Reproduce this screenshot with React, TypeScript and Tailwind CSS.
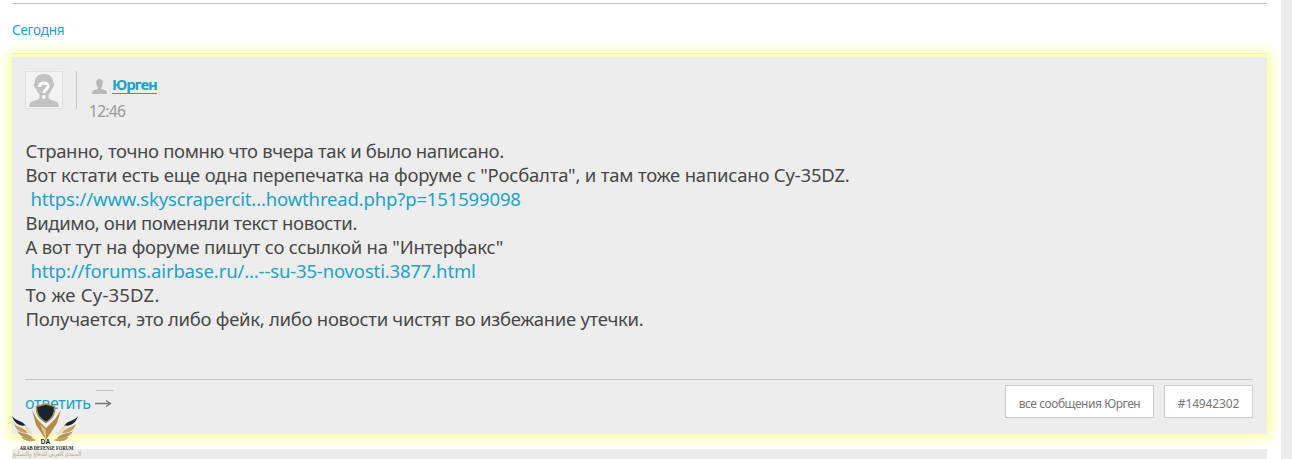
type Line = { text: string; tracking: string; link?: boolean };

const lines: Line[] = [
  { text: 'Странно, точно помню что вчера так и было написано.', tracking: 'tracking-[-0.34px]' },
  { text: 'Вот кстати есть еще одна перепечатка на форуме с "Росбалта", и там тоже написано Су-35DZ.', tracking: 'tracking-[-0.19px]' },
  { text: 'https://www.skyscrapercit...howthread.php?p=151599098', tracking: 'tracking-[-0.15px]', link: true },
  { text: 'Видимо, они поменяли текст новости.', tracking: 'tracking-[-0.36px]' },
  { text: 'А вот тут на форуме пишут со ссылкой на "Интерфакс"', tracking: 'tracking-[-0.23px]' },
  { text: 'http://forums.airbase.ru/...--su-35-novosti.3877.html', tracking: 'tracking-[-0.15px]', link: true },
  { text: 'То же Су-35DZ.', tracking: 'tracking-[0.2px]' },
  { text: 'Получается, это либо фейк, либо новости чистят во избежание утечки.', tracking: 'tracking-[-0.28px]' },
];

function Avatar() {
  return (
    <div className="h-[38px] w-[38px] border border-[#e0e0e0] bg-[#f2f2f2]">
      <svg viewBox="0 0 36 36" className="h-9 w-9">
        <path
          d="M18 2c-6.500 0-9.500 4-9.200 9-.9.2-1.200 1-.9 2.300.3 1.900 1.200 3.200 2.100 3.400.7 2.400 1.900 4.400 3.500 5.700v3.700c-1.500 1.800-6 2.700-8.300 4-1.300.8-2 2.200-2.200 4.900h30c-.2-2.700-.9-4.100-2.200-4.900-2.300-1.300-6.800-2.200-8.300-4v-3.700c1.600-1.300 2.800-3.300 3.500-5.700.9-.2 1.800-1.500 2.100-3.400.3-1.300 0-2.100-.9-2.300.3-5-2.700-9-9.200-9z"
          fill="#c2c2c2"
        />
        <path d="M13.400 15c.2-2.700 1.800-4 4.500-4 2.500 0 4.200 1.200 4.200 3.300 0 3-4.300 2.900-4.300 6.800" fill="none" stroke="#fff" strokeWidth="3" />
        <circle cx="17.900" cy="24.800" r="1.900" fill="#fff" />
      </svg>
    </div>
  );
}

function UserIcon() {
  return (
    <svg viewBox="0 0 15 15" className="h-[15px] w-[15px]">
      <path d="M7.500 0C5 0 4 1.700 4.200 4c.1 1.900.8 3.300 1.600 4.200v1.300C4.800 10.700.5 10.900.2 13v2h14.600v-2c-.3-2.100-4.600-2.300-5.600-3.500V8.200c.8-.9 1.500-2.300 1.600-4.200C11 1.700 10 0 7.500 0z" fill="#b8b8b8" />
    </svg>
  );
}

function Wing() {
  return (
    <g>
      <path d="M1 14c3 5 10 4 14 10-7 0-12-3-14-10z" fill="#17252e" />
      <path d="M3 21.500c3 4 9 2.500 14 9.500-7 0-12-2-14-9.500z" fill="#c4a163" />
      <path d="M6 29c5 3 10 1 16 7-6 1-13-1-16-7z" fill="#b8945a" />
      <path d="M10 35c5 0 10 0 15 3-5 3-12 1-15-3z" fill="#c4a163" />
      <path d="M13 23c5 2 7 5 8 10-4-2-7-6-8-10z" fill="#eadcae" />
    </g>
  );
}

// Forum emblem laid over the bottom left corner of the post
function Watermark() {
  return (
    <div className="absolute left-[11px] top-[402px] h-[57px] w-[72px]">
      <svg viewBox="0 0 72 57" className="h-[57px] w-[72px] overflow-visible">
        <Wing />
        <g transform="translate(68 0) scale(-1 1)">
          <Wing />
        </g>
        <path d="M21 8l5 9 9 9 9-9 6-9-4 13-11 17-10-15z" fill="#b48b48" />
        <path d="M29 22l6 6v10z" fill="#dcc38a" />
        <path d="M25.500 4.500L35 2l8.500 2.500c1 8-2.500 12-8.500 16C28.500 16.500 25 12.500 25.500 4.500z" fill="#17252e" stroke="#a98a52" strokeWidth="1.500" />
        <text x="34.500" y="41.500" textAnchor="middle" fontFamily="Liberation Sans" fontWeight="bold" fontSize="6.500" fill="#182124">DA</text>
        <g transform="translate(35.500 48) scale(.82 1)">
          <text textAnchor="middle" fontFamily="Liberation Serif" fontWeight="bold" fontSize="5.600" fill="#222">ARAB DEFENSE FORUM</text>
        </g>
        <g transform="translate(36 54) scale(.72 1)">
          <text textAnchor="middle" fontFamily="DejaVu Sans" fontWeight="bold" fontSize="6.200" fill="#ceb994">المنتدى العربي للدفاع والتسليح</text>
        </g>
      </svg>
    </div>
  );
}

function Post() {
  return (
    <article className="mt-[3px] h-[377px] bg-[#ededed] pl-[13px] pr-[14px] pt-[14px] shadow-[0_0_12px_4px_#f8ff98]">
      <header className="flex h-[68px] items-start">
        <Avatar />
        <div className="ml-[13px] h-[38px] w-px bg-[#c8c8c8]" />
        <div className="ml-3">
          <div className="flex h-[26px] items-center gap-[5px] pl-[3px] pt-[5px]">
            <UserIcon />
            <a className="-mt-[5px] border-b border-[#20a3c6] text-[15px] font-bold leading-[18px] tracking-[-1.1px] text-[#20a3c6]">Юрген</a>
          </div>
          <time className="block text-[15.5px] leading-7 tracking-[-0.7px] text-[#999]">12:46</time>
        </div>
      </header>

      <div className="h-[240px] whitespace-nowrap pl-[0.5px] text-[18.5px] leading-6 text-[#484848]">
        {lines.map((line) => (
          <p key={line.text} className={line.link ? 'pl-[5px] text-[#20a3c6]' : ''}>
            <span className={line.tracking}>{line.text}</span>
          </p>
        ))}
      </div>

      <footer className="flex items-start border-t border-[#c8c8c8] pt-[5px]">
        <a className="flex items-center pt-[6px] text-[16px] leading-6 text-[#20a3c6]">
          <span className="tracking-[-0.3px]">ответить</span>
          <svg viewBox="0 0 20 26" className="-mt-[4px] ml-1 h-[26px] w-5" fill="none" stroke="#777">
            <path d="M1 2.500h18" stroke="#c4c4c4" />
            <path d="M0 15.500h15M11 12.500l4.500 3-4.500 3" strokeWidth="1.300" />
          </svg>
        </a>
        <div className="ml-auto flex gap-[10px] text-[12px] text-[#777]">
          <a className="flex h-[33px] w-[149px] items-center justify-center border border-[#ccc] bg-white pt-1 tracking-[-0.45px]">все сообщения Юрген</a>
          <a className="flex h-[33px] w-[89px] items-center justify-center border border-[#ccc] bg-white pt-1 tracking-[-0.15px]">#14942302</a>
        </div>
      </footer>
    </article>
  );
}

export default function App() {
  return (
    <div className="relative flex h-[459px] w-[1292px] overflow-hidden bg-white font-['Noto_Sans',sans-serif]">
      <main className="ml-3 w-[1255px] pt-[3px]">
        <div className="flex h-[51px] items-center border-b border-t border-b-[#e4e4c8] border-t-[#c8c8c8] text-[13.5px] tracking-[-0.25px] text-[#20a3c6]">
          <span className="pt-[3px]">Сегодня</span>
        </div>
        <Post />
        <div className="mt-[15px] h-5 bg-[#ededed]" />
      </main>
      <div className="ml-auto w-[11px] bg-[#ececec]" />
      <Watermark />
    </div>
  );
}
